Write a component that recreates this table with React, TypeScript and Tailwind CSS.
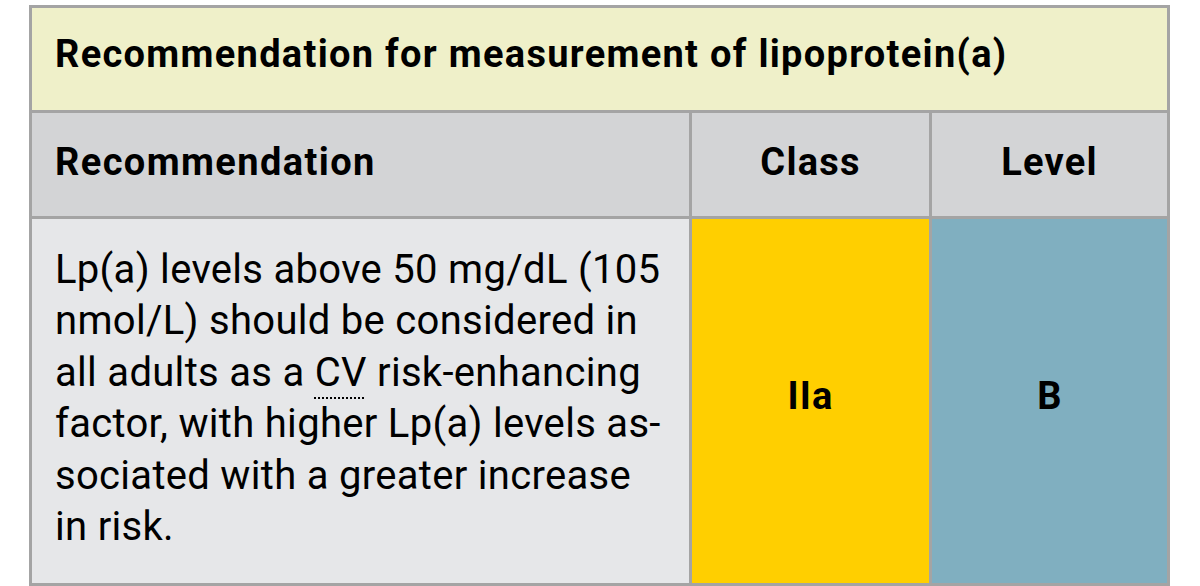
import React from "react";

export default function App() {
  return (
    <div className="w-[1200px] h-[586px] bg-white overflow-hidden" style={{ fontFamily: "Roboto, 'Liberation Sans', sans-serif" }}>
      <div className="ml-[29px] mt-[5px] w-[1141px] bg-[#a4a4a4] p-[3px] flex flex-col gap-[3px] text-black">
        <div className="h-[102px] bg-[#eff0c9] flex items-center pl-[23px] pb-[10px]">
          <span className="text-[38px] font-bold leading-none tracking-[1.3px]">Recommendation for measurement of lipoprotein(a)</span>
        </div>
        <div className="h-[103px] grid grid-cols-[657px_237px_235px] gap-[3px]">
          <div className="bg-[#d3d4d6] flex items-center pl-[23px] pb-[6px]">
            <span className="text-[38px] font-bold leading-none tracking-[1.4px]">Recommendation</span>
          </div>
          <div className="bg-[#d3d4d6] flex items-center justify-center pb-[6px]">
            <span className="text-[38px] font-bold leading-none tracking-[1.2px]">Class</span>
          </div>
          <div className="bg-[#d3d4d6] flex items-center justify-center pb-[6px]">
            <span className="text-[38px] font-bold leading-none tracking-[1.2px]">Level</span>
          </div>
        </div>
        <div className="h-[364px] grid grid-cols-[657px_237px_235px] gap-[3px]">
          <div className="bg-[#e6e7e9] flex items-center pl-[23px] pb-[6px]">
            <p className="text-[40px] leading-[51.5px] tracking-[0.3px] whitespace-nowrap">
              Lp(a) levels above 50 mg/dL (105<br />
              nmol/L) should be considered in<br />
              all adults as a{" "}
              <span className="underline decoration-dotted decoration-[2px] decoration-black underline-offset-[12px]">CV</span>{" "}
              risk-enhancing<br />
              factor, with higher Lp(a) levels as-<br />
              sociated with a greater increase<br />
              in risk.
            </p>
          </div>
          <div className="bg-[#ffcf00] flex items-center justify-center pb-[10px]">
            <span className="text-[38px] font-bold leading-none tracking-[1.2px]">IIa</span>
          </div>
          <div className="bg-[#80afc0] flex items-center justify-center pb-[10px]">
            <span className="text-[38px] font-bold leading-none">B</span>
          </div>
        </div>
      </div>
    </div>
  );
}
